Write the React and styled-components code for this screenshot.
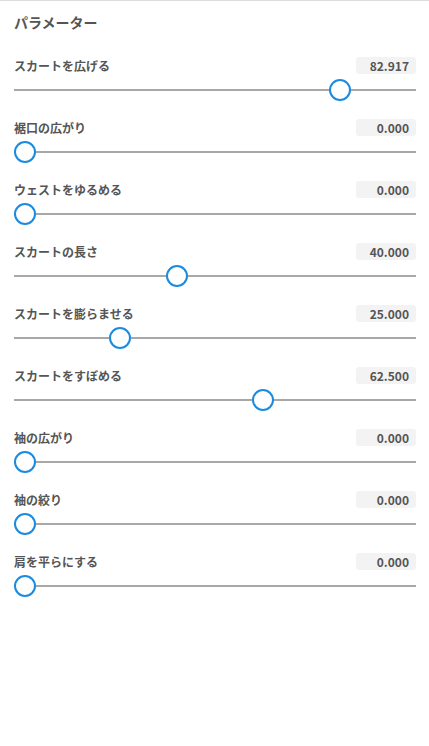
import React from "react";
import styled, { createGlobalStyle } from "styled-components";

const Global = createGlobalStyle`
  html, body { margin: 0; padding: 0; background: #fff; }
  body { font-family: "Noto Sans CJK JP", "Noto Sans", sans-serif; }
`;

const Panel = styled.div`
  border-top: 1px solid #dcdcdc;
  padding: 13px 13px 0 14px;
`;

const Title = styled.h2`
  margin: 0 0 27px;
  font-size: 14px;
  line-height: 16px;
  font-weight: 700;
  color: #555;
`;

const List = styled.div`
  display: flex;
  flex-direction: column;
  gap: 18px;
`;

const Row = styled.div`
  display: flex;
  flex-direction: column;
  gap: 5px;
`;

const Header = styled.div`
  display: flex;
  align-items: center;
  justify-content: space-between;
  height: 17px;
`;

const Label = styled.span`
  font-size: 12px;
  font-weight: 700;
  color: #555;
  line-height: 17px;
`;

const Value = styled.span`
  width: 60px;
  height: 17px;
  box-sizing: border-box;
  background: #f3f3f3;
  border-radius: 3px;
  padding-right: 7px;
  text-align: right;
  font-size: 12px;
  font-weight: 700;
  line-height: 17px;
  color: #555;
`;

const Slider = styled.div`
  position: relative;
  height: 22px;
  display: flex;
  align-items: center;
`;

const Track = styled.div`
  flex: 1;
  height: 2px;
  background: #a8a8a8;
`;

const Thumb = styled.div`
  position: absolute;
  top: 0;
  width: 22px;
  height: 22px;
  box-sizing: border-box;
  border: 2px solid #1b8be0;
  border-radius: 50%;
  background: #fff;
`;

const params = [
  ["スカートを広げる", 82.917],
  ["裾口の広がり", 0],
  ["ウェストをゆるめる", 0],
  ["スカートの長さ", 40],
  ["スカートを膨らませる", 25],
  ["スカートをすぼめる", 62.5],
  ["袖の広がり", 0],
  ["袖の絞り", 0],
  ["肩を平らにする", 0],
];

export default function App() {
  return (
    <>
      <Global />
      <Panel>
        <Title>パラメーター</Title>
        <List>
          {params.map(([label, v]) => (
            <Row key={label}>
              <Header>
                <Label>{label}</Label>
                <Value>{v.toFixed(3)}</Value>
              </Header>
              <Slider>
                <Track />
                <Thumb style={{ left: `calc((100% - 22px) * ${v / 100})` }} />
              </Slider>
            </Row>
          ))}
        </List>
      </Panel>
    </>
  );
}
